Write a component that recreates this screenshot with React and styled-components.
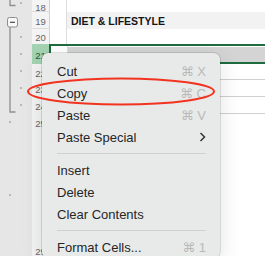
import styled, { createGlobalStyle } from 'styled-components'

const GlobalStyle = createGlobalStyle`
  html, body {
    margin: 0;
    padding: 0;
    background: #ffffff;
  }
  body {
    font-family: 'Liberation Sans', Arial, sans-serif;
  }
`

const green = '#1e6b3e'

const Page = styled.div`
  position: relative;
  width: 265px;
  height: 256px;
  overflow: hidden;
  display: flex;
  background: #ffffff;
`

const Gutter = styled.div`
  width: 32px;
  flex: none;
  background: #e6e6e6;

  & svg {
    display: block;
  }
`

const Sheet = styled.div`
  flex: 1;
  display: flex;
  flex-direction: column;
`

const Row = styled.div`
  display: flex;
  height: ${p => p.$h}px;
  flex: none;
`

const RowHead = styled.div`
  width: 18px;
  flex: none;
  box-sizing: border-box;
  display: flex;
  justify-content: center;
  align-items: center;
  padding-top: 3px;
  font-size: 9.5px;
  color: ${p => (p.$active ? '#1d5a34' : '#646464')};
  background: ${p => (p.$active ? '#a4d3b2' : '#f4f4f4')};
  border-bottom: 1px solid ${p => (p.$active || !p.$line ? 'transparent' : '#dcdcdc')};
  border-right: 1px solid #d2d2d2;
`

const Cells = styled.div`
  flex: 1;
  display: flex;
  box-sizing: border-box;
  ${p =>
    p.$selected &&
    `
    border-top: 2px solid ${green};
    border-bottom: 2px solid ${green};
    border-left: 2px solid ${green};
    margin-left: -1px;
  `}
  ${p => p.$line && 'border-bottom: 1px solid #d0d0d0;'}
`

const CellA = styled.div`
  width: 17px;
  flex: none;
  box-sizing: border-box;
  border-right: 1px solid #dedede;
  background: #ffffff;
`

const CellB = styled.div`
  flex: 1;
  display: flex;
  align-items: center;
  padding-left: 4px;
  background: ${p => (p.$fill ? p.$fill : '#ffffff')};
  box-shadow: ${p => (p.$gap ? 'inset 0 1px 0 #ffffff' : 'none')};
  font-size: 10.5px;
  font-weight: 700;
  color: #151515;
  white-space: nowrap;
`

const Menu = styled.div`
  position: absolute;
  left: 42px;
  top: 53px;
  width: 178px;
  box-sizing: border-box;
  padding-top: 7px;
  background: #e8eaea;
  border-radius: 6px;
  box-shadow: 0 0 0 0.5px rgba(0, 0, 0, 0.22), 0 6px 22px rgba(0, 0, 0, 0.12);
`

const Item = styled.div`
  height: 22px;
  display: flex;
  align-items: center;
  justify-content: space-between;
  padding: 0 14px 0 15px;
  font-size: 13px;
  color: #262626;
`

const Shortcut = styled.span`
  font-family: 'Liberation Sans', 'DejaVu Sans', sans-serif;
  color: #b9b9b9;
  font-size: 13px;
`

const Separator = styled.div`
  height: 1px;
  margin: 5px 14px 5px 15px;
  background: #cfd1d1;
`

const Highlight = styled.svg`
  position: absolute;
  left: 26px;
  top: 76px;
`

const rows = [
  { n: '18', h: 12, line: true },
  { n: '19', h: 17, line: true, title: 'DIET & LIFESTYLE', fill: '#f2f2f2' },
  { n: '20', h: 15 },
  { n: '21', h: 20, selected: true },
  { n: '22', h: 16, cellLine: true },
  { n: '23', h: 17, cellLine: true },
  { n: '24', h: 17, cellLine: true },
  { n: '25', h: 17 },
  { n: '', h: 111 },
  { n: '29', h: 17 },
]

const menu = [
  { label: 'Cut', key: '⌘ X' },
  { label: 'Copy', key: '⌘ C' },
  { label: 'Paste', key: '⌘ V' },
  { label: 'Paste Special', sub: true },
  { sep: true },
  { label: 'Insert' },
  { label: 'Delete' },
  { label: 'Clear Contents' },
  { sep: true },
  { label: 'Format Cells...', key: '⌘ 1' },
]

function OutlineMarks() {
  const dots = [
    [21, 3], [21, 37], [21, 54], [21, 71], [21, 88], [21, 105], [10, 122], [10, 195],
  ]
  return (
    <svg width="32" height="256" viewBox="0 0 32 256">
      <path d="M10 0 V5.5 H15.5" fill="none" stroke="#8e8e8e" strokeWidth="1.3" />
      <rect x="7.5" y="17.5" width="10" height="9.5" rx="2" fill="#f8f8f8" stroke="#8e8e8e" />
      <path d="M10 22.3 H15" stroke="#4a4a4a" strokeWidth="1.2" />
      <path d="M10 27 V112 H15.5" fill="none" stroke="#8e8e8e" strokeWidth="1.3" />
      {dots.map(([x, y]) => (
        <rect key={`${x}-${y}`} x={x - 0.7} y={y - 0.7} width="1.4" height="1.4" fill="#8a8a8a" />
      ))}
    </svg>
  )
}

function Chevron() {
  return (
    <svg width="7" height="10" viewBox="0 0 7 10">
      <path d="M1.5 1 L5.5 5 L1.5 9" fill="none" stroke="#333" strokeWidth="1.5" />
    </svg>
  )
}

export default function App() {
  return (
    <>
      <GlobalStyle />
      <Page>
        <Gutter>
          <OutlineMarks />
        </Gutter>
        <Sheet>
          {rows.map((r, i) => (
            <Row key={i} $h={r.h}>
              <RowHead $active={r.selected} $line={r.line}>{r.n}</RowHead>
              <Cells $selected={r.selected} $line={r.cellLine}>
                <CellA />
                <CellB $fill={r.selected ? '#d4d4d4' : r.fill} $gap={r.selected}>
                  {r.title}
                </CellB>
              </Cells>
            </Row>
          ))}
        </Sheet>

        <Menu>
          {menu.map((m, i) =>
            m.sep ? (
              <Separator key={i} />
            ) : (
              <Item key={i}>
                <span>{m.label}</span>
                {m.key && <Shortcut>{m.key}</Shortcut>}
                {m.sub && <Chevron />}
              </Item>
            )
          )}
        </Menu>

        <Highlight width="192" height="31" viewBox="0 0 192 31">
          <ellipse cx="95" cy="15.5" rx="93" ry="13" fill="none" stroke="#f2331f" strokeWidth="2" />
        </Highlight>
      </Page>
    </>
  )
}
